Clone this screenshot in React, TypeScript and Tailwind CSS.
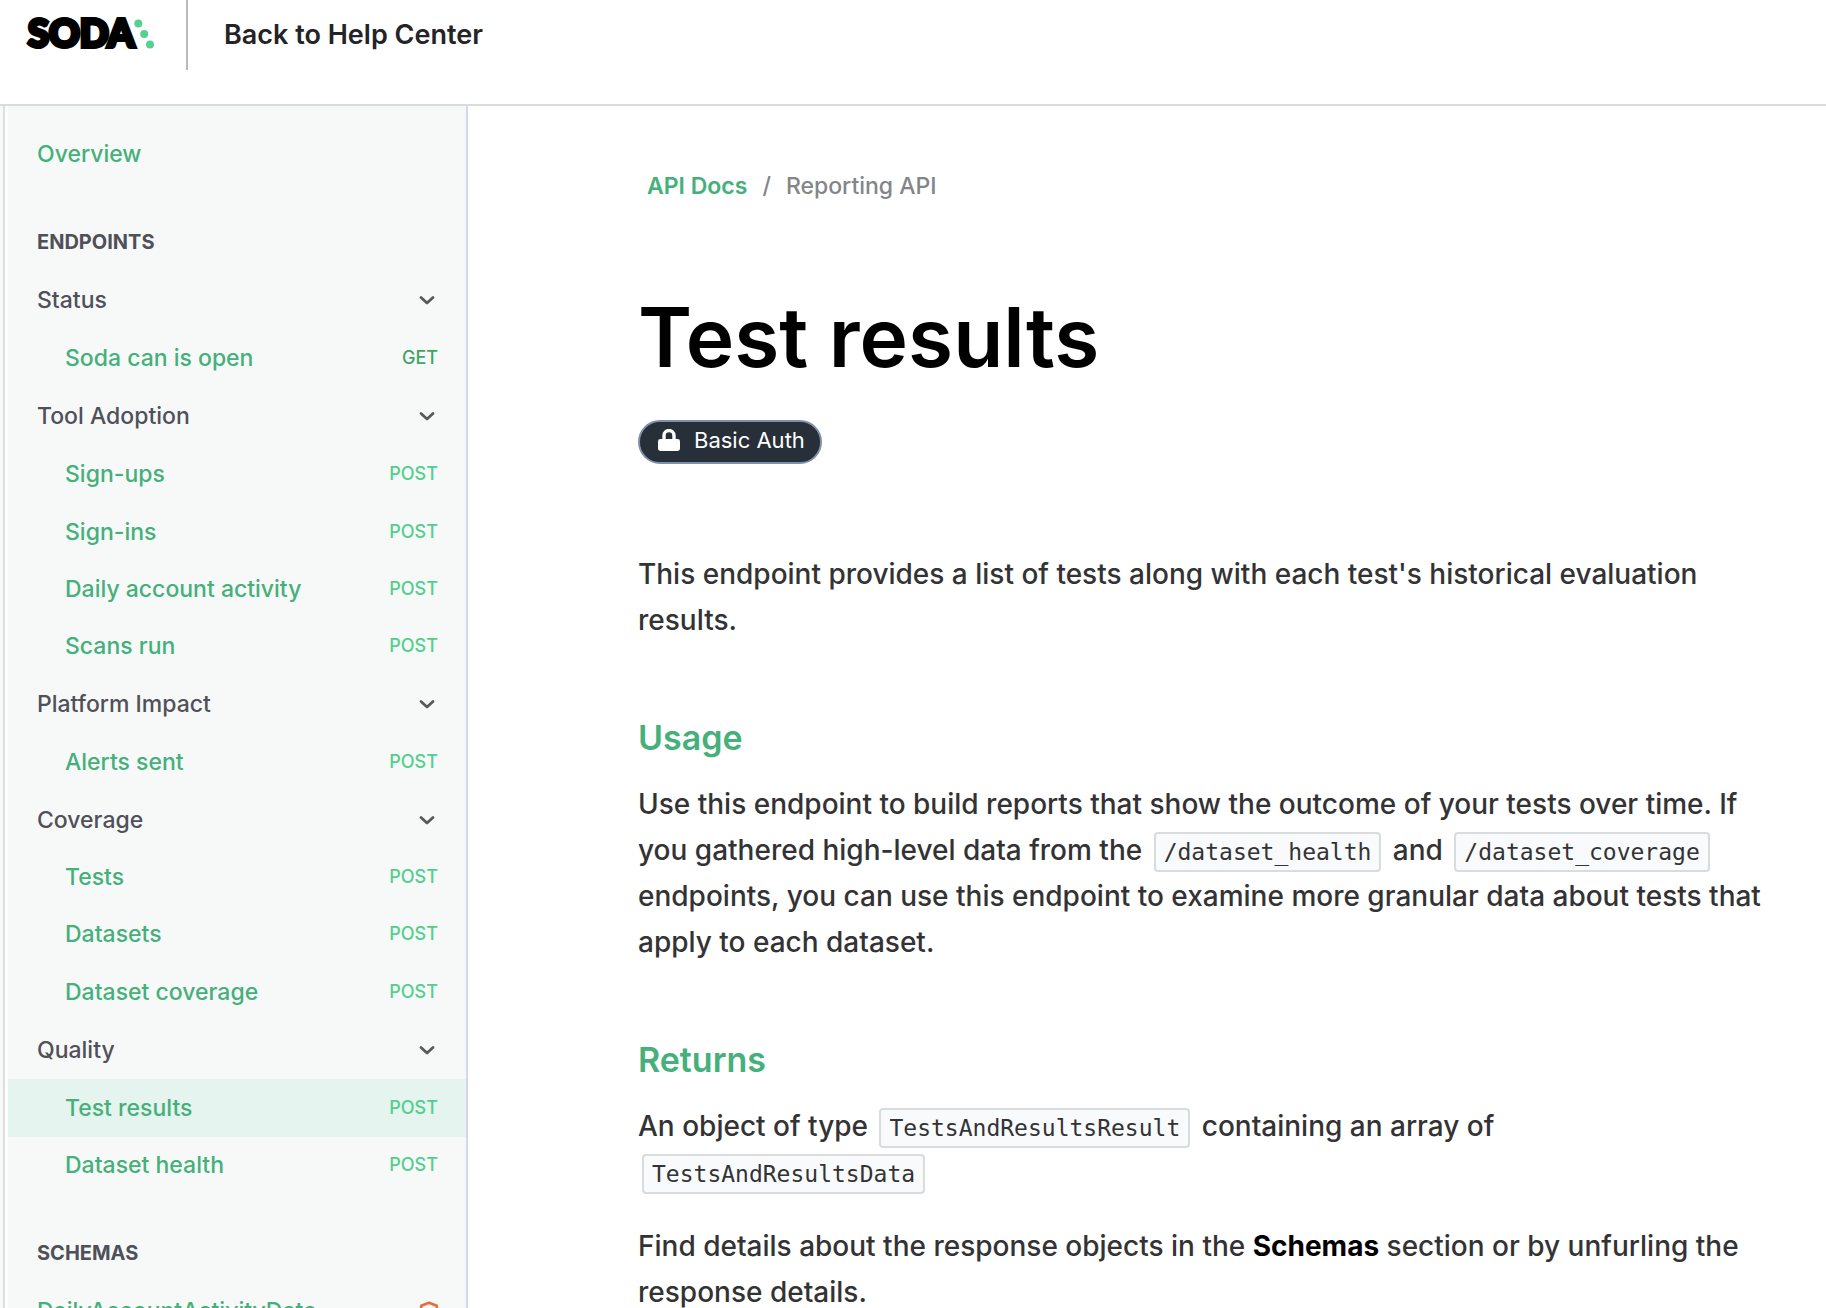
import React from "react";

type Row = {
  label: string;
  method?: "GET" | "POST";
  active?: boolean;
  tight?: boolean;
};

const endpoints: Row[] = [
  { label: "Status" },
  { label: "Soda can is open", method: "GET" },
  { label: "Tool Adoption" },
  { label: "Sign-ups", method: "POST" },
  { label: "Sign-ins", method: "POST" },
  { label: "Daily account activity", method: "POST", tight: true },
  { label: "Scans run", method: "POST" },
  { label: "Platform Impact" },
  { label: "Alerts sent", method: "POST" },
  { label: "Coverage" },
  { label: "Tests", method: "POST", tight: true },
  { label: "Datasets", method: "POST" },
  { label: "Dataset coverage", method: "POST" },
  { label: "Quality" },
  { label: "Test results", method: "POST", active: true },
  { label: "Dataset health", method: "POST", tight: true },
];

function Logo() {
  return (
    <svg width="130" height="56" viewBox="0 0 130 56" role="img" aria-label="Soda">
      <text
        x="2"
        y="40"
        fontSize="38"
        fill="#000"
        stroke="#000"
        strokeWidth="4"
        className="font-['Lato',sans-serif] font-black"
      >
        SODA
      </text>
      <g fill="#55d08f">
        <circle cx="112.300" cy="16.600" r="4" />
        <circle cx="118.200" cy="27" r="4" />
        <circle cx="124" cy="37.400" r="4" />
      </g>
    </svg>
  );
}

function Chevron() {
  return (
    <svg
      width="24"
      height="24"
      viewBox="0 0 24 24"
      fill="none"
      stroke="#58595b"
      strokeWidth="2.8"
      strokeLinecap="round"
      strokeLinejoin="round"
      aria-hidden="true"
    >
      <path d="M6 9.5l6 5.6 6-5.6" />
    </svg>
  );
}

function Lock() {
  return (
    <svg width="22" height="22" viewBox="0 0 22 22" aria-hidden="true">
      <path d="M6 11V6.500a5 5 0 0 1 10 0V11" fill="none" stroke="#fff" strokeWidth="3.4" />
      <rect x="0" y="10" width="22" height="12" rx="2.400" fill="#fff" />
    </svg>
  );
}

function Hexagon() {
  return (
    <svg
      width="20"
      height="20"
      viewBox="0 0 20 20"
      fill="none"
      stroke="#e86a35"
      strokeWidth="2.6"
      strokeLinejoin="round"
      aria-hidden="true"
    >
      <path d="M10 1.800L17.800 4.800V14.800L10 18.400L2.200 14.800V4.800Z" />
    </svg>
  );
}

function SidebarRow({ row }: { row: Row }) {
  if (!row.method) {
    return (
      <li>
        <button type="button" className="flex h-[58px] w-full items-center justify-between pr-[27px] pl-[29px] text-left text-[#505059]">
          {row.label}
          <Chevron />
        </button>
      </li>
    );
  }
  return (
    <li>
      <a
        href="#"
        aria-current={row.active ? "page" : undefined}
        className={`flex items-center justify-between pr-7 pl-[57px] text-[#45b07a] ${row.tight ? "h-14" : "h-[58px]"} ${row.active ? "bg-[#e5f4ee]" : ""}`}
      >
        {row.label}
        <span className={`text-lg ${row.method === "GET" ? "text-[#3fa565]" : "text-[#52cf8d]"}`}>{row.method}</span>
      </a>
    </li>
  );
}

function SectionTitle({ children }: { children: React.ReactNode }) {
  return <h2 className="flex h-[58px] items-center pl-[29px] text-xl font-bold text-[#505059]">{children}</h2>;
}

function Code({ children }: { children: React.ReactNode }) {
  return (
    <code className="mx-1 inline-block rounded border-2 border-[#d8dcdd] bg-[#f8fafc] px-2 py-1 font-['DejaVu_Sans_Mono',monospace] text-[23px] leading-7 font-normal">
      {children}
    </code>
  );
}

function Heading({ children }: { children: React.ReactNode }) {
  return <h2 className="mt-[72px] mb-5 text-[34px] leading-[46px] font-semibold text-[#45b07a]">{children}</h2>;
}

export default function App() {
  return (
    <div className="flex h-screen flex-col overflow-hidden bg-white font-['Inter',sans-serif] font-medium">
      <header className="flex shrink-0 border-b-2 border-[#d8dcdb] pb-[34px]">
        <div className="flex h-[70px] items-center border-r-2 border-[#b9babb] pr-[30px] pl-[26px]">
          <a href="#">
            <Logo />
          </a>
        </div>
        <a href="#" className="flex items-center pl-9 text-[27px] font-semibold text-[#242428]">
          Back to Help Center
        </a>
      </header>

      <div className="flex min-h-0 grow">
        <aside className="w-[468px] shrink-0 overflow-hidden border-r-2 border-[#d3d9e8] bg-[#f7f9f8] pl-[3px]">
          <nav className="h-full border-l-2 border-[#dcdfde]">
            <div className="min-h-full border-l-[3px] border-[#fcfdfd] pt-[19px] text-[23px]">
              <a href="#" className="mb-[30px] flex h-[58px] items-center pl-[29px] text-[#45b07a]">
                Overview
              </a>
              <SectionTitle>ENDPOINTS</SectionTitle>
              <ul className="mb-[31px]">
                {endpoints.map((row) => (
                  <SidebarRow key={row.label} row={row} />
                ))}
              </ul>
              <SectionTitle>SCHEMAS</SectionTitle>
              <a href="#" className="flex h-[58px] items-center justify-between pr-[27px] pl-[29px] text-[#45b07a]">
                DailyAccountActivityData
                <Hexagon />
              </a>
            </div>
          </nav>
        </aside>

        <main className="min-w-0 grow overflow-hidden pt-[65px] pr-14 pl-[170px] text-[28px] leading-[46px] text-[#333335]">
          <nav aria-label="Breadcrumb" className="ml-[9px] flex gap-[15px] text-[23px] leading-[30px] text-[#838689]">
            <a href="#" className="font-semibold text-[#45b07a]">
              API Docs
            </a>
            <span>/</span>
            <span>Reporting API</span>
          </nav>

          <h1 className="mt-[93px] text-[82px] leading-[88px] font-semibold text-black">Test results</h1>

          <div className="mt-[38px] flex">
            <button
              type="button"
              className="flex items-center gap-3.5 rounded-full border-2 border-[#8190aa] bg-[#272f38] pt-[3px] pr-[15px] pb-[7px] pl-[18px] text-[22px] leading-[30px] font-normal text-white"
            >
              <Lock />
              Basic Auth
            </button>
          </div>

          <p className="mt-[87px]">
            This endpoint provides a list of tests along with each test's historical evaluation results.
          </p>

          <Heading>Usage</Heading>
          <p>
            Use this endpoint to build reports that show the outcome of your tests over time. If you gathered high-level data
            from the <Code>/dataset_health</Code> and <Code>/dataset_coverage</Code> endpoints, you can use this endpoint to
            examine more granular data about tests that apply to each dataset.
          </p>

          <Heading>Returns</Heading>
          <p>
            An object of type <Code>TestsAndResultsResult</Code> containing an array of <Code>TestsAndResultsData</Code>
          </p>
          <p className="mt-7">
            Find details about the response objects in the <strong className="font-bold text-black">Schemas</strong> section or
            by unfurling the response details.
          </p>
        </main>
      </div>
    </div>
  );
}
